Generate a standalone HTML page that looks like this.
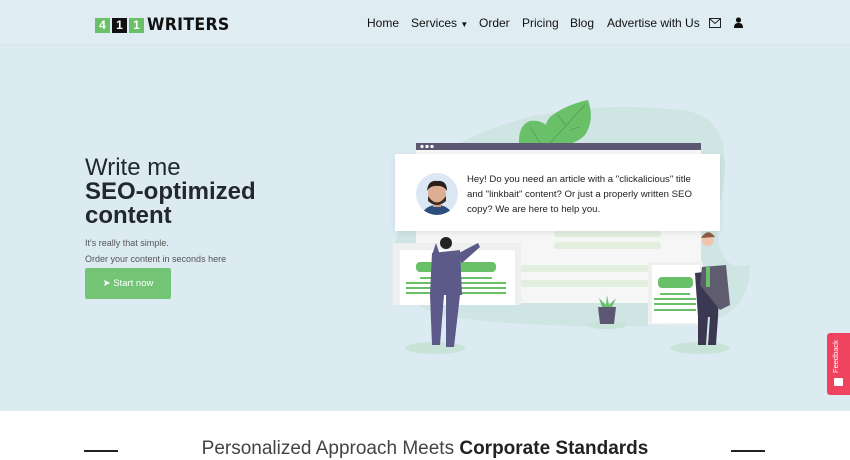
<!DOCTYPE html>
<html><head><meta charset="utf-8"><style>
*{margin:0;padding:0;box-sizing:border-box}
body{width:850px;height:458px;overflow:hidden;font-family:"Liberation Sans",Arial,sans-serif;background:#fff;position:relative}
.hero{position:absolute;left:0;top:0;width:850px;height:411px;background:#dcebf1}
.hdr{position:absolute;left:0;top:0;width:850px;height:45px;background:#dfedf3;border-bottom:1px solid #d5e6ec}
.logo{position:absolute;left:95px;top:15px;display:flex;align-items:center}
.logo span.b{width:15px;height:15px;display:inline-block;color:#fff;font-weight:bold;font-size:12px;text-align:center;line-height:15px;margin-right:2px}
.logo .w{font-weight:900;font-size:17px;letter-spacing:.3px;color:#111;margin-left:1px;font-family:"DejaVu Sans",sans-serif;transform:scaleX(.93);transform-origin:left}
.nav{position:absolute;top:16px;font-size:12px;color:#111}
h1{position:absolute;left:85px;top:156px;font-size:24px;line-height:24px;color:#23282d;font-weight:normal}
h1 b{font-weight:bold}
.sub{position:absolute;left:85px;font-size:9px;color:#555}
.btn{position:absolute;left:85px;top:268px;width:86px;height:31px;background:#74c476;border-radius:2px;color:#fff;font-size:9.5px;text-align:center;line-height:31px}
.card{position:absolute;background:#fff;box-shadow:0 2px 6px rgba(0,0,0,.08)}
.fb{position:absolute;left:827px;top:333px;width:23px;height:62px;background:#ef4360;border-radius:3px 0 0 3px}
.fb span{position:absolute;left:4px;top:40px;transform:rotate(-90deg);transform-origin:left top;color:#fff;font-size:7.5px}
.sec{position:absolute;top:438px;width:850px;text-align:center;font-size:19px;color:#444;font-weight:300}
.line{position:absolute;top:450px;width:34px;height:2px;background:#222}
</style></head><body>
<div class="hero"></div>
<div class="hdr"></div>
<div class="logo"><span class="b" style="background:#6abf69">4</span><span class="b" style="background:#111">1</span><span class="b" style="background:#6abf69">1</span><span class="w">WRITERS</span></div>
<div class="nav" style="left:367px">Home</div>
<div class="nav" style="left:411px">Services <span style="font-size:8px">▼</span></div>
<div class="nav" style="left:479px">Order</div>
<div class="nav" style="left:522px">Pricing</div>
<div class="nav" style="left:570px">Blog</div>
<div class="nav" style="left:607px">Advertise with Us</div>
<svg style="position:absolute;left:709px;top:18px" width="12" height="10"><rect x="0.5" y="0.5" width="11" height="9" fill="none" stroke="#222"/><path d="M1 1 L6 5.5 L11 1" fill="none" stroke="#222"/></svg>
<svg style="position:absolute;left:734px;top:17px" width="9" height="11"><circle cx="4.5" cy="3" r="2.6" fill="#111"/><path d="M0 11 Q0 5.5 4.5 6 Q9 5.5 9 11Z" fill="#111"/></svg>

<h1>Write me<br><b>SEO-optimized<br>content</b></h1>
<div class="sub" style="top:238px">It's really that simple.</div>
<div class="sub" style="top:254px">Order your content in seconds here</div>
<div class="btn">➤ Start now</div>

<svg style="position:absolute;left:380px;top:95px" width="380" height="275">
<path d="M60 60 Q150 0 300 15 Q360 20 340 110 Q330 180 370 170 Q370 230 300 230 Q150 235 60 220 Q-5 200 20 130 Q30 80 60 60Z" fill="#cfe5e3"/>
<ellipse cx="55" cy="253" rx="30" ry="6" fill="#c8e3d8"/>
<ellipse cx="320" cy="253" rx="30" ry="6" fill="#c8e3d8"/>
<ellipse cx="227" cy="230" rx="20" ry="4" fill="#c8e3d8"/>
<path d="M139 50 Q138 30 150 26 Q165 24 172 38 Q174 46 170 50Z" fill="#6abf69"/>
<path d="M168 50 Q160 35 170 22 Q185 10 208 5 Q215 25 205 40 Q195 50 180 50Z" fill="#6abf69"/>
<path d="M170 48 L205 10 M150 32 L160 48 M185 30 L178 20 M190 35 L200 32" stroke="#4f9a50" stroke-width="0.7" fill="none"/>
<rect x="36" y="48" width="285" height="160" fill="#f6f6f6"/>
<rect x="36" y="48" width="285" height="7" fill="#5c5874"/>
<circle cx="42" cy="51.5" r="1.6" fill="#fff"/><circle cx="47" cy="51.5" r="1.6" fill="#fff"/><circle cx="52" cy="51.5" r="1.6" fill="#fff"/>
<rect x="174" y="135" width="107" height="7" rx="3" fill="#e2efdf"/>
<rect x="174" y="147" width="107" height="7" rx="3" fill="#e2efdf"/>
<rect x="40" y="170" width="240" height="7" fill="#e2efdf"/>
<rect x="40" y="185" width="240" height="7" fill="#e2efdf"/>
<rect x="13" y="148" width="128" height="62" fill="#eef0f0"/>
<rect x="20" y="155" width="115" height="55" fill="#fff"/>
<rect x="36" y="167" width="80" height="10" rx="4" fill="#6abf69"/>
<rect x="40" y="182" width="72" height="2" fill="#6abf69"/>
<rect x="26" y="187" width="100" height="2" fill="#6abf69"/><rect x="26" y="192" width="100" height="2" fill="#6abf69"/><rect x="26" y="197" width="100" height="2" fill="#6abf69"/>
<rect x="268" y="167" width="55" height="63" fill="#eef0f0"/>
<rect x="272" y="170" width="48" height="58" fill="#fff"/>
<rect x="278" y="182" width="35" height="11" rx="4" fill="#6abf69"/>
<rect x="280" y="198" width="30" height="2" fill="#6abf69"/>
<rect x="274" y="203" width="42" height="2" fill="#6abf69"/><rect x="274" y="208" width="42" height="2" fill="#6abf69"/><rect x="274" y="214" width="42" height="2" fill="#6abf69"/>
<path d="M218 212 L236 212 L234 229 L220 229Z" fill="#5c5874"/>
<path d="M222 212 L219 203 L226 210 L227 200 L229 210 L236 203 L232 212Z" fill="#6abf69"/>
<g fill="#5c5a88"><path d="M52 158 L80 155 L82 200 L50 200Z"/><path d="M50 200 L64 200 L60 250 L52 250Z"/><path d="M66 200 L80 200 L74 252 L66 252Z"/><path d="M52 160 L56 148 L60 160Z"/><path d="M75 160 L98 148 L100 152 L82 168Z"/></g>
<circle cx="66" cy="148" r="6" fill="#222"/>
<g fill="#3b3951"><path d="M315 178 L340 175 L338 222 L318 222Z"/><path d="M318 222 L328 222 L326 250 L318 250Z"/><path d="M330 222 L338 222 L336 250 L328 250Z"/></g>
<path d="M322 172 L346 170 L350 210 L340 215 L320 190Z" fill="#5e5c6e"/>
<rect x="326" y="172" width="4" height="20" fill="#6abf69"/>
<circle cx="328" cy="145" r="6" fill="#f1c4b0"/><path d="M321 143 Q328 132 335 142Z" fill="#8c5d45"/>
</svg>

<div class="card" style="left:395px;top:154px;width:325px;height:77px"></div>
<svg style="position:absolute;left:416px;top:173px" width="42" height="42"><defs><clipPath id="c"><circle cx="21" cy="21" r="21"/></clipPath></defs><circle cx="21" cy="21" r="21" fill="#dbe7f3"/><g clip-path="url(#c)"><path d="M5 42 Q10 32 21 32 Q32 32 37 42Z" fill="#2c4d7e"/><rect x="17" y="26" width="8" height="8" fill="#d59d82"/><ellipse cx="21" cy="21" rx="9" ry="11" fill="#deae93"/><path d="M12 23 Q21 36 30 23 L30 28 Q21 36 12 28Z" fill="#3a2a22"/><path d="M11 18 Q12 7 21 8 Q31 7 31 18 Q27 12 21 13 Q15 12 11 18Z" fill="#2a1f1a"/></g></svg>
<div style="position:absolute;left:467px;top:172px;font-size:9.6px;line-height:15px;color:#222;width:232px">Hey! Do you need an article with a "clickalicious" title and "linkbait" content? Or just a properly written SEO copy? We are here to help you.</div>

<div class="fb"><span>Feedback</span><div style="position:absolute;left:7px;top:45px;width:9px;height:8px;background:#fff;border-radius:1px"></div></div>

<div class="line" style="left:84px"></div>
<div class="line" style="left:731px"></div>
<div class="sec">Personalized Approach Meets <b style="font-weight:bold;color:#222">Corporate Standards</b></div>
</body></html>
